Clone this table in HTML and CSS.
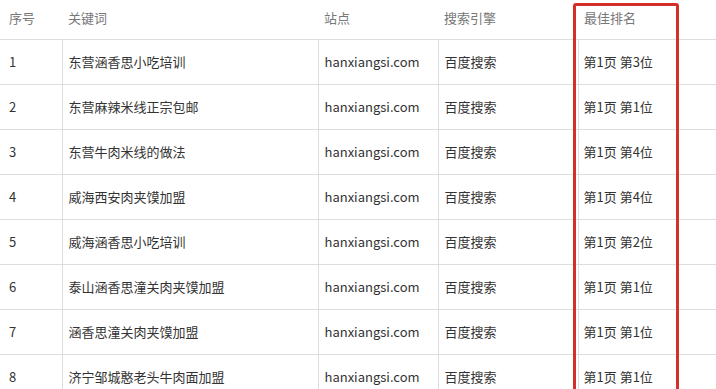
FILE: index.html
```html
<!DOCTYPE html>
<html lang="zh">
<head>
<meta charset="utf-8">
<link rel="stylesheet" href="styles.css">
</head>
<body>
<div class="wrap">
<table class="rank">
<colgroup>
<col class="c-no"><col class="c-kw"><col class="c-site"><col class="c-eng"><col class="c-rank">
</colgroup>
<thead>
<tr><th>序号</th><th>关键词</th><th>站点</th><th>搜索引擎</th><th>最佳排名</th></tr>
</thead>
<tbody>
<tr><td>1</td><td>东营涵香思小吃培训</td><td>hanxiangsi.com</td><td>百度搜索</td><td>第1页 第3位</td></tr>
<tr><td>2</td><td>东营麻辣米线正宗包邮</td><td>hanxiangsi.com</td><td>百度搜索</td><td>第1页 第1位</td></tr>
<tr><td>3</td><td>东营牛肉米线的做法</td><td>hanxiangsi.com</td><td>百度搜索</td><td>第1页 第4位</td></tr>
<tr><td>4</td><td>威海西安肉夹馍加盟</td><td>hanxiangsi.com</td><td>百度搜索</td><td>第1页 第4位</td></tr>
<tr><td>5</td><td>威海涵香思小吃培训</td><td>hanxiangsi.com</td><td>百度搜索</td><td>第1页 第2位</td></tr>
<tr><td>6</td><td>泰山涵香思潼关肉夹馍加盟</td><td>hanxiangsi.com</td><td>百度搜索</td><td>第1页 第1位</td></tr>
<tr><td>7</td><td>涵香思潼关肉夹馍加盟</td><td>hanxiangsi.com</td><td>百度搜索</td><td>第1页 第1位</td></tr>
<tr><td>8</td><td>济宁邹城憨老头牛肉面加盟</td><td>hanxiangsi.com</td><td>百度搜索</td><td>第1页 第1位</td></tr>
</tbody>
</table>
<div class="highlight"></div>
</div>
</body>
</html>
```
FILE: styles.css
```css
html, body {
  margin: 0;
  padding: 0;
  background: #fff;
  overflow: hidden;
}
body {
  font-family: "Noto Sans CJK SC", "Noto Sans", sans-serif;
  font-size: 13px;
  color: #333;
}
.wrap {
  position: relative;
  width: 716px;
  height: 389px;
  overflow: hidden;
}
.rank {
  border-collapse: collapse;
  table-layout: fixed;
  width: 716px;
}
.c-no { width: 62px; }
.c-kw { width: 256px; }
.c-site { width: 120px; }
.c-eng { width: 140px; }
.c-rank { width: 138px; }
.rank th {
  box-sizing: border-box;
  height: 39px;
  padding: 0 0 4px 6px;
  text-align: left;
  font-weight: normal;
  color: #777;
  border-bottom: 1px solid #ddd;
  vertical-align: middle;
  line-height: 1;
}
.rank td {
  height: 44px;
  padding: 0 0 0 6px;
  border-bottom: 1px solid #ddd;
  border-left: 1px solid #ddd;
  vertical-align: middle;
  white-space: nowrap;
}
.rank th:first-child,
.rank td:first-child {
  padding-left: 9px;
  border-left: none;
}
.rank td:nth-child(5) { padding-left: 5px; }
.highlight {
  position: absolute;
  left: 573px;
  top: 3px;
  width: 100px;
  height: 400px;
  border: 3px solid #d3302c;
  border-radius: 3px;
}
```
